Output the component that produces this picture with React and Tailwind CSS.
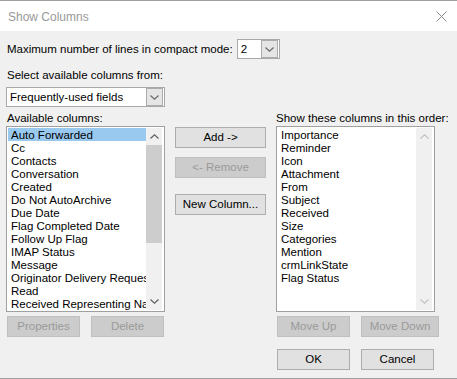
import React from "react";

const available = [
  "Auto Forwarded",
  "Cc",
  "Contacts",
  "Conversation",
  "Created",
  "Do Not AutoArchive",
  "Due Date",
  "Flag Completed Date",
  "Follow Up Flag",
  "IMAP Status",
  "Message",
  "Originator Delivery Requested",
  "Read",
  "Received Representing Name",
];

const shown = [
  "Importance",
  "Reminder",
  "Icon",
  "Attachment",
  "From",
  "Subject",
  "Received",
  "Size",
  "Categories",
  "Mention",
  "crmLinkState",
  "Flag Status",
];

function Chevron({ up, color = "#606060" }) {
  return (
    <svg width="9" height="5" viewBox="0 0 9 5">
      <path
        d={up ? "M0.5 4.5 L4.5 0.8 L8.5 4.5" : "M0.5 0.5 L4.5 4.2 L8.5 0.5"}
        fill="none"
        stroke={color}
        strokeWidth="1.2"
      />
    </svg>
  );
}

function Combo({ value, width }) {
  return (
    <div className={`flex items-center h-[20px] bg-white border border-[#a8a8a8] ${width}`}>
      <span className="flex-1 pl-[3px] leading-[19px] pt-px text-black">{value}</span>
      <div className="w-[17px] h-[18px] mr-px bg-[#e5e5e5] border border-[#acacac] flex items-center justify-center">
        <Chevron color="#6a6a6a" />
      </div>
    </div>
  );
}

function Btn({ children, disabled, w = "w-[73px]", h = "h-[21px]" }) {
  return (
    <div
      className={`${w} ${h} flex items-center justify-center border ${
        disabled
          ? "bg-[#cccccc] border-[#bfbfbf] text-[#9a9a9a]"
          : "bg-[#e1e1e1] border-[#adadad] text-black"
      }`}
    >
      {children}
    </div>
  );
}

function ListBox({ items, selected, active }) {
  return (
    <div className="w-[159px] h-[186px] bg-white border border-[#a0a0a0] p-px flex">
      <div className="flex-1 overflow-hidden">
        {items.map((item, i) => (
          <div
            key={item}
            className={`h-[13px] leading-[15px] pl-[3px] whitespace-nowrap overflow-hidden ${
              i === selected ? "bg-[#99c9ef]" : ""
            }`}
          >
            {item}
          </div>
        ))}
      </div>
      <div className="w-[16px] bg-[#f0f0f0] flex flex-col">
        <div className="h-[17px] flex items-center justify-center">
          <Chevron up color={active ? "#606060" : "#c0c0c0"} />
        </div>
        <div className="flex-1">
          {active && <div className="h-[98px] bg-[#cdcdcd]" />}
        </div>
        <div className="h-[17px] flex items-center justify-center">
          <Chevron color={active ? "#606060" : "#c0c0c0"} />
        </div>
      </div>
      <div className="w-px" />
    </div>
  );
}

export default function App() {
  return (
    <div className="w-[457px] h-[379px] bg-[#f0f0f0] border-t border-b border-[#a0a0a0] font-['Liberation_Sans',sans-serif] text-[11.5px] text-black overflow-hidden">
      {/* Title bar */}
      <div className="h-[30px] bg-white flex items-center justify-between pl-[8px] pr-[10px]">
        <span className="text-[12px] text-[#999999] pt-px">Show Columns</span>
        <svg width="11" height="11" viewBox="0 0 11 11">
          <path d="M0.5 0.5 L10.5 10.5 M10.5 0.5 L0.5 10.5" stroke="#8a8a8a" strokeWidth="1" />
        </svg>
      </div>

      <div className="pl-[6px]">
        <div className="flex items-center h-[20px] mt-[8px]">
          <span className="pl-px mr-[4px] pt-[2px]">Maximum number of lines in compact mode:</span>
          <Combo value="2" width="w-[43px]" />
        </div>

        <div className="mt-[8px] h-[14px] leading-[16px] pl-px">Select available columns from:</div>

        <div className="mt-[6px]">
          <Combo value="Frequently-used fields" width="w-[159px]" />
        </div>

        <div className="flex mt-[3px]">
          {/* Left column */}
          <div className="w-[160px]">
            <div className="h-[14px] leading-[16px] pl-px mb-[2px]">Available columns:</div>
            <ListBox items={available} selected={0} active />
            <div className="flex mt-[4px] pl-px gap-[11px]">
              <Btn disabled>Properties</Btn>
              <Btn disabled>Delete</Btn>
            </div>
          </div>

          {/* Middle buttons */}
          <div className="ml-[9px] w-[91px] pt-[17px] flex flex-col">
            <Btn w="w-[91px]">Add -&gt;</Btn>
            <div className="mt-[9px]">
              <Btn w="w-[91px]" disabled>&lt;- Remove</Btn>
            </div>
            <div className="mt-[16px]">
              <Btn w="w-[91px]">New Column...</Btn>
            </div>
          </div>

          {/* Right column */}
          <div className="ml-[10px] w-[171px]">
            <div className="h-[14px] leading-[16px] mb-[2px] whitespace-nowrap">Show these columns in this order:</div>
            <ListBox items={shown} selected={-1} />
            <div className="flex mt-[4px] pl-px gap-[11px]">
              <Btn disabled>Move Up</Btn>
              <Btn disabled w="w-[78px]">Move Down</Btn>
            </div>
            <div className="flex mt-[12px] pl-px gap-[11px]">
              <Btn>OK</Btn>
              <Btn>Cancel</Btn>
            </div>
          </div>
        </div>
      </div>
    </div>
  );
}
